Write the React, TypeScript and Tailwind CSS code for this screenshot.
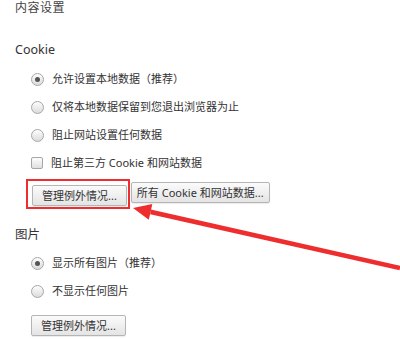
import React from 'react';

const font = { fontFamily: '"Noto Sans", "Noto Sans CJK SC", sans-serif' };

const Radio = ({ checked, label }: { checked?: boolean; label: string }) => (
  <label className="flex items-center h-[28px] pl-[16px] text-[11px] text-[#333]">
    <span className="flex items-center justify-center w-[13px] h-[13px] rounded-full border border-[#a6a6a6] bg-gradient-to-b from-[#fdfdfd] to-[#dcdcdc] shrink-0">
      {checked && <span className="w-[5px] h-[5px] rounded-full bg-[#555]" />}
    </span>
    <span className="ml-[8px]">{label}</span>
  </label>
);

const Checkbox = ({ label }: { label: string }) => (
  <label className="flex items-center h-[28px] pl-[16px] text-[11px] text-[#333]">
    <span className="w-[12px] h-[12px] rounded-[2px] border border-[#a6a6a6] bg-gradient-to-b from-[#fdfdfd] to-[#e0e0e0] shrink-0" />
    <span className="ml-[8px]">{label}</span>
  </label>
);

const Button = ({ children, wide }: { children: React.ReactNode; wide?: boolean }) => (
  <button
    className={`h-[21px] ${wide ? 'px-[5px]' : 'px-[9px]'} rounded-[2px] border border-[#b5b5b5] bg-gradient-to-b from-[#fbfbfb] to-[#e4e4e4] text-[11px] leading-[19px] text-[#333] shadow-[0_1px_1px_rgba(0,0,0,0.08)]`}
  >
    {children}
  </button>
);

export default function App() {
  return (
    <div className="relative w-[400px] h-[339px] overflow-hidden bg-white" style={font}>
      <div className="pl-[15px]">
        <h1 className="mt-0 h-[16px] leading-[16px] text-[12px] tracking-[0.5px] text-[#444]">内容设置</h1>

        <h2 className="mt-[26px] h-[16px] leading-[16px] text-[12.5px] text-[#333]">Cookie</h2>
        <div className="mt-[7px]">
          <Radio checked label="允许设置本地数据（推荐）" />
          <Radio label="仅将本地数据保留到您退出浏览器为止" />
          <Radio label="阻止网站设置任何数据" />
          <Checkbox label="阻止第三方 Cookie 和网站数据" />
        </div>
        <div className="mt-[5px] pl-[17px] flex gap-[4px]">
          <div className="relative">
            <Button>管理例外情况...</Button>
            <span className="absolute left-[-6px] right-[-3px] top-[-3px] bottom-[-3px] border-2 border-[#ee2e2e]" />
          </div>
          <Button wide>所有 Cookie 和网站数据...</Button>
        </div>

        <h2 className="mt-[21px] h-[16px] leading-[16px] text-[12.5px] text-[#333]">图片</h2>
        <div className="mt-[6px]">
          <Radio checked label="显示所有图片（推荐）" />
          <Radio label="不显示任何图片" />
        </div>
        <div className="mt-[7px] pl-[16px]">
          <Button>管理例外情况...</Button>
        </div>
      </div>

      <svg className="absolute inset-0 pointer-events-none" width="400" height="339" viewBox="0 0 400 339">
        <polygon points="133,208 152.3,204.1 150.6,211.9 148.8,219.7" fill="#ee2e2e" />
        <polygon points="150.8,209.6 400.5,265.8 399.5,270.2 150.2,214.2" fill="#ee2e2e" />
      </svg>
    </div>
  );
}
